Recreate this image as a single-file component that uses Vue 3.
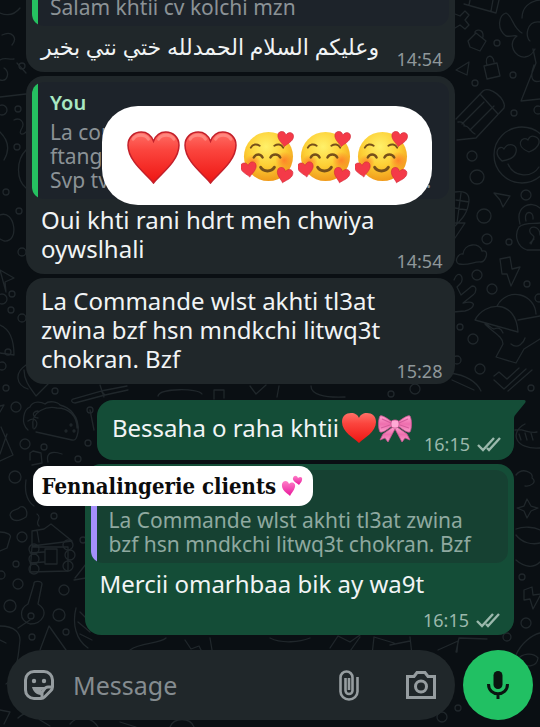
<template>
  <div class="chat">
    <svg class="wallpaper" viewBox="0 0 540 727" preserveAspectRatio="xMidYMid slice" aria-hidden="true">
      <!-- small bubbles scattered between the doodles -->
      <circle v-for="(dot, i) in dots" :key="i" :cx="dot[0]" :cy="dot[1]" :r="dot[2]" />
      <!-- right side -->
      <path d="M464 4l32 9 3-13M470 0l-1 5M493 0l-2 11" />
      <path d="M455 14l5 2 5-5 4 4-4 5 4 5-4 4-5-4-5 3" />
      <path d="M468 41l8-8 10 8-6 10-10-4zM475 33c-1-4 9-5 8 4" />
      <path d="M484 66l13-3 3 13-13 3zM487 65c-3-10 6-12 7-3" />
      <path d="M456 70l13-8-2 13z" />
      <path d="M522 33c-10-6-9-17-16-20-7 2-10 16 0 23 6 1 8-1 11 0-10 8-2 22 8 21 6-1 8-4 10-8 M540 22c-14-2-15 16-10 19M522 18c0-10 7-17 18-18" />
      <path d="M533 49l3 14-15 38 19-2M534 65c-5 14-1 18 6 16" />
      <path d="M456 119l27-28c6-6 24 8 21 17l-28 30-19 2M462 124l22-22M470 130l24-24M480 94l18 20M458 122c4-1 7 2 6 4 5-1 6 6 11 8" />
      <circle cx="522" cy="155" r="28" />
      <path d="M502 161c-10-9-2-17 2-12 4-7 14-5 12 3-1 5-7 8-14 9zM529 152c-15-6-7-17-1-12 3-7 12-3 11 3-1 4-5 7-10 9zM508 164c6 14 24 14 31 3" />
      <path d="M494 193l16 3-7 11-3-7zM455 192c8-1 14 0 14 8-1 14-8 20-14 26M456 200l13 2M455 208l12 2M461 193l-4 30M455 223l10 0-10 15" />
      <path d="M519 227c5-5 15-3 21-4M519 227c-5 8-2 20 8 23l13 0M520 224c-5-18 11-24 20-16M526 221c-3-11 8-11 7-2M534 239l-4 4M540 235c0-10-12-10-10-3 0 2 3 3 4 5l-3 7" />
      <path d="M459 264c-6-3 0-11 4-10 1-11 17-12 19-3 8-2 4 11-1 11-7-1-12 4-22 2z" />
      <path d="M500 259l10-2 2 12 8-2-9 19-4-12-5 0z" />
      <path d="M454 280c4-12 12-2 6 4l-3 3 4 8 11-9c6 0 4 7 1 9l-10 8c15-4 12 6 2 8l-12 1" />
      <path d="M475 320c9-18 41-22 43 12zM497 306c11-20 38-12 39 8M518 320l22-4M485 324c7 8 18 12 18 20l-7 13 20 6 8-14 16-10M485 324c5 1 5 4 9 5 4-2 7-1 9 4M511 344c7 6 13-2 14-6" />
      <path d="M494 376l5-4 8 7 12-11M494 380l10 9 22-20M508 391l24-21M450 373c16 2 27 9 31 18M452 380l22 10" />
      <path d="M525 424c-16 8-10 26 15 24M515 430c8-2 14 4 22 2M519 434l2 6M525 433l2 7M531 433l2 7" />
      <path d="M516 475c6-8 18-3 16 3 6 4-2 9-7 8M527 499l4 7 7 2-7 3-4 7-3-7-7-3 7-2zM516 529c8-3 18-2 24 1M516 535c6 8 16 10 24 8M516 560c9 8 18 8 24 2" />
      <path d="M524 590l8-3 1 8 8-1-8 15-3-10-6 1zM516 655c5-12 16-20 24-22M517 660c5-7 16-8 21-2-1 9-12 10-16 4M438 650l20-9-1 11M330 648l8-12 12 6 10-7M348 654l12-17M372 655l2-18 20 6M390 645l20-4M412 655l-2-18M456 652l3-14 28 1" />
      <!-- left side -->
      <path d="M0 80c8 2 10-8 4-12M0 13c10 4 16 0 20-5M2 35c10-5 16 3 10 10M0 60c5-3 9 0 14-1M17 63l9 10M0 97l26-3M14 120c6-3 11 2 8 8-4 6 0 8 4 4M0 132c8 8 10 18 4 28M26 150c-10 10-10 30 0 38M0 215c15-6 20 28 4 26l-4-2M0 270l14 8-9 4 1 10zM0 325c12 5 14 20 14 30l-14-2M26 365c-12 8-10 20 2 24" />
      <path d="M24 370c0 12 8 20 12 26l18-18M28 430c-8-7-4-21 2-23 3-7 12-5 15-3 4-4 13-2 15 1 8 2 20 10 18 27-1 5-2 9-6 8l-36-8M33 428c-3-18 15-22 24-20 12 0 20 8 20 20M28 421c8-6 12 4 6 8M38 411c-8 1-4 7 0 7" />
      <path d="M73 399l28-8 4 4-30 8c-4 0-4-3-2-4zM101 391l26-5M105 395l23-5M0 406l4-1-4 7M1 427l12 28-13 6M7 434l-7 20M30 460v-7l3-2 8 2 1 10-10 2M48 462c-3-12 8-10 14-8M90 410l4 20M26 480c-3 20 8 26 8 26" />
      <path d="M10 515c1-7 8-4 10-8 6-2 8 6 6 10-6 4-14 6-16-2zM37 514c6 4-3 8 2 12M32 531l12-2 7-5 21 17-40 5zM37 530l2 12M32 547h36v24l-38 1zM45 549h12v15H45zM30 553l14-1M30 563l14-1" />
      <path d="M0 532c7 0 12 3 10 6l-3 10-7 3M34 584c-1-4 8-3 8 0l-4 20c12 8 4 20-8 20-12-4-10-16-2-20zM18 628l12-8M75 578l11-14M74 580l12-2M40 650l9-24 17 24M76 608c-4 16 0 32 12 40M80 612l8 8M78 622l12 10M80 634l12 6" />
      <path d="M0 626c16 0 20 8 20 14-2 20-4 38-14 44M0 640l6 3M0 710l10 2-6 12M18 718c8-8 18-4 22 2l10 6M70 724c10-12 24-4 28 3M120 722l16 5M170 727c4-10 20-10 24 0" />
      <!-- slivers seen between the bubbles -->
      <path d="M100 385l4 12M158 396c2-8 40-8 44-2M214 399v-9h10v8M250 386l6 8 10-9M277 397l2-11M311 386c0 8 12 12 34 11M130 650c10-8 30-6 36-12M185 640l6 9 8-3 2 4M210 638l2 12M270 638c12 6 30 4 40 0" />
    </svg>

    <svg class="sprites" width="0" height="0" aria-hidden="true">
      <defs>
        <linearGradient id="redFill" x1="0" y1="0" x2="0" y2="1">
          <stop offset="0" stop-color="#ff7067" />
          <stop offset="0.35" stop-color="#fb453e" />
          <stop offset="1" stop-color="#ee1512" />
        </linearGradient>
        <radialGradient id="faceFill" cx="0.45" cy="0.3" r="0.7">
          <stop offset="0" stop-color="#fff16a" />
          <stop offset="0.55" stop-color="#fdcf35" />
          <stop offset="1" stop-color="#f09a1a" />
        </radialGradient>
        <radialGradient id="blush">
          <stop offset="0" stop-color="#ff6a26" stop-opacity="0.7" />
          <stop offset="1" stop-color="#ff6a26" stop-opacity="0" />
        </radialGradient>
        <linearGradient id="pinkFill" x1="0" y1="0" x2="0" y2="1">
          <stop offset="0" stop-color="#ff7fc8" />
          <stop offset="1" stop-color="#e8169a" />
        </linearGradient>
        <linearGradient id="bowFill" x1="0" y1="0" x2="0" y2="1">
          <stop offset="0" stop-color="#ffa0cf" />
          <stop offset="0.5" stop-color="#ee6fae" />
          <stop offset="1" stop-color="#fb9acb" />
        </linearGradient>
      </defs>
      <symbol id="heart" viewBox="0 0 52 52">
        <path d="M26 51C20 43 1 30 1 14C1 6 7 1 14 1C20 1 24 5 26 10C28 5 32 1 38 1C45 1 51 6 51 14C51 30 32 43 26 51Z" fill="url(#redFill)" stroke="#c3202a" stroke-width="1.5" />
        <path d="M6 8C9 3 18 3 21 8M31 8C34 3 43 3 46 8" fill="none" stroke="#ff9d94" stroke-width="3" stroke-linecap="round" opacity="0.6" />
      </symbol>
      <symbol id="softHeart" viewBox="0 0 34 30">
        <path d="M17 30C12 25 0 19 0 9C0 3 4 0 9 0C13 0 16 2 17 5C18 2 21 0 25 0C30 0 34 3 34 9C34 19 22 25 17 30Z" fill="url(#redFill)" />
      </symbol>
      <symbol id="loveFace" viewBox="0 0 54 54">
        <circle cx="28" cy="26" r="25" fill="url(#faceFill)" />
        <circle cx="12" cy="32" r="8" fill="url(#blush)" />
        <circle cx="44" cy="30" r="9" fill="url(#blush)" />
        <g fill="none" stroke="#76501a" stroke-width="2" stroke-linecap="round">
          <path d="M10 17C12 13 16 13 19 15M34 15C37 13 41 13 43 17" />
          <path d="M13 27C15 23 20 23 22 27M30 27C32 23 38 23 40 27" stroke-width="2.5" />
          <path d="M20 37C23 42 31 42 34 37" stroke-width="3" />
        </g>
        <g stroke="#d12a3a">
          <use href="#miniHeart" transform="translate(37 1) rotate(8 8 8)" />
          <use href="#miniHeart" transform="translate(0 32) rotate(-8 8 8)" />
          <use href="#miniHeart" transform="translate(36 38) rotate(14 8 8)" />
        </g>
      </symbol>
      <path id="miniHeart" d="M8 15C6 12 0 9 0 4C0 1 2 0 4 0C6 0 7 1 8 3C9 1 11 0 12 0C14 0 16 1 16 4C16 9 10 12 8 15Z" fill="#f43a48" stroke-width="0.6" />
    </svg>

    <main class="messages">
      <article class="bubble incoming">
        <blockquote class="quote">
          <p>Salam khtii cv kolchi mzn</p>
        </blockquote>
        <div class="body">
          <p class="text arabic" dir="rtl" lang="ar">وعليكم السلام الحمدلله ختي نتي بخير</p>
          <time>14:54</time>
        </div>
      </article>

      <article class="bubble incoming">
        <blockquote class="quote">
          <strong>You</strong>
          <p>La comm</p>
          <p>ftange</p>
          <p class="cut"><span>Svp tv</span><span>...</span></p>
        </blockquote>
        <div class="body">
          <p class="text">{{ 'Oui khti rani hdrt meh chwiya\noywslhali' }}</p>
          <time>14:54</time>
        </div>
        <div class="sticker reactions">
          <svg v-for="(name, i) in reactions" :key="i" class="emoji"><use :href="'#' + name" /></svg>
        </div>
      </article>

      <article class="bubble incoming plain">
        <div class="body">
          <p class="text">{{ 'La Commande wlst akhti tl3at\nzwina bzf hsn mndkchi litwq3t\nchokran. Bzf' }}</p>
          <time>15:28</time>
        </div>
      </article>

      <article class="bubble outgoing short">
        <svg class="tail" viewBox="0 0 12 18" aria-hidden="true"><path d="M0 0H10C12 0 12 2 11 3L2 14Q0 16 0 18Z" fill="#144d37" /></svg>
        <div class="body">
          <p class="text">
            Bessaha o raha khtii
            <svg class="inline-heart" viewBox="0 0 34 30"><use href="#softHeart" /></svg>
            <svg class="bow" viewBox="0 0 34 28">
              <path d="M15 13L5 20L2 26L7 24L10 28L17 15L24 28L27 24L32 26L29 20L19 13Z" fill="url(#bowFill)" stroke="#c9528f" stroke-width="0.8" />
              <path d="M14 8C9 4 4 1 2 2C0 6 0 14 2 18C5 19 10 15 14 12ZM20 8C25 4 30 1 32 2C34 6 34 14 32 18C29 19 24 15 20 12Z" fill="url(#bowFill)" stroke="#c9528f" stroke-width="0.8" />
              <path d="M4 5L13 9M3 14L12 11M30 5L21 9M31 14L22 11" stroke="#d65d9c" stroke-width="1.2" />
              <rect x="13" y="6" width="8" height="8" rx="3" fill="#ffa9d4" stroke="#c9528f" stroke-width="0.8" />
            </svg>
          </p>
          <span class="meta">
            <time>16:15</time>
            <svg class="checks" viewBox="0 0 25 16" role="img" aria-label="Delivered"><path d="M1 9L6 14L17 2M10 12L12 14L23 2" /></svg>
          </span>
        </div>
      </article>

      <article class="bubble outgoing">
        <blockquote class="quote">
          <strong>&nbsp;</strong>
          <p>{{ 'La Commande wlst akhti tl3at zwina\nbzf hsn mndkchi litwq3t chokran. Bzf' }}</p>
        </blockquote>
        <div class="body stacked">
          <p class="text">Mercii omarhbaa bik ay wa9t</p>
          <span class="meta">
            <time>16:15</time>
            <svg class="checks" viewBox="0 0 25 16" role="img" aria-label="Delivered"><path d="M1 9L6 14L17 2M10 12L12 14L23 2" /></svg>
          </span>
        </div>
        <div class="sticker label">
          <span>Fennalingerie clients</span>
          <svg class="hearts" viewBox="0 0 22 22">
            <path d="M9 21C6 18 0 15 1 9C2 5 7 5 8 9C11 6 15 8 14 12C13 16 10 18 9 21Z" fill="url(#pinkFill)" />
            <path d="M18 10C16 8 11 6 12 3C13 0 16 0 17 3C19 1 22 2 21 5C21 7 19 8 18 10Z" fill="url(#pinkFill)" />
          </svg>
        </div>
      </article>
    </main>

    <form class="composer" @submit.prevent>
      <div class="field">
        <button type="button" aria-label="Emoji and stickers">
          <svg width="30" height="30" viewBox="0 0 30 30">
            <path d="M10 1.500H20A8.500 8.500 0 0 1 28.500 10V17C28.500 19 27.500 20 26.500 21L20.500 27C19.500 28 18 28.500 17 28.500H10A8.500 8.500 0 0 1 1.500 20V10A8.500 8.500 0 0 1 10 1.500Z" class="line" />
            <path d="M28 17H24C20 17 20 21 18 22V28" class="line" />
            <circle cx="10" cy="11" r="2.200" /><circle cx="20" cy="11" r="2.200" />
            <path d="M8 17H22L17 21V25C12 25 9 21 8 17Z" />
          </svg>
        </button>
        <input v-model="draft" type="text" placeholder="Message" aria-label="Message" />
        <button type="button" aria-label="Attach">
          <svg width="20" height="31" viewBox="0 0 20 31">
            <path d="M18.500 7V21.500A8.500 8 0 0 1 1.500 21.500V7.500A6 6 0 0 1 13.500 7.500V20.500A3.500 3.500 0 0 1 6.500 20.500V8M10 8V20" class="line clip" />
          </svg>
        </button>
        <button type="button" class="camera" aria-label="Camera">
          <svg width="30" height="28" viewBox="0 0 30 28">
            <path d="M1.500 5.500H8L11 1.500H19L22 5.500H28.500V26.500H1.500Z" class="line" />
            <circle cx="15" cy="15.500" r="5.500" class="line" />
          </svg>
        </button>
      </div>
      <button type="button" class="mic" aria-label="Record voice message">
        <svg width="22" height="30" viewBox="0 0 22 30">
          <rect x="6.500" y="1" width="9" height="18" rx="4.500" />
          <path d="M1.500 14C1.500 27 20.500 27 20.500 14M11 23V29" class="line" />
        </svg>
      </button>
    </form>
  </div>
</template>

<script setup>
import { ref } from 'vue'

const draft = ref('')

const reactions = ['heart', 'heart', 'loveFace', 'loveFace', 'loveFace']

// [x, y, radius]
const dots = [
  [497, 43, 3], [475, 83, 3], [513, 75, 3], [514, 113, 3], [538, 110, 4],
  [472, 156, 5], [477, 177, 7], [526, 195, 5], [484, 216, 7], [487, 239, 5],
  [509, 242, 3], [477, 275, 5], [492, 289, 5], [527, 284, 3], [460, 327, 3],
  [473, 339, 5], [480, 369, 5], [457, 360, 4], [531, 388, 3], [539, 298, 4],
  [415, 389, 5], [391, 394, 3], [522, 577, 3], [526, 623, 5], [507, 637, 4],
  [458, 708, 3], [442, 717, 5], [2, 110, 5], [18, 109, 3], [17, 147, 3],
  [6, 192, 3], [19, 211, 3], [22, 252, 4], [2, 299, 5], [12, 294, 3],
  [11, 310, 3], [22, 318, 4], [8, 352, 3], [2, 366, 4], [6, 388, 3],
  [55, 391, 3], [16, 407, 5], [90, 410, 3], [25, 444, 5], [44, 447, 3],
  [88, 443, 3], [78, 459, 3], [15, 477, 6], [54, 516, 3], [22, 537, 5],
  [16, 564, 3], [18, 584, 5], [10, 606, 6], [64, 590, 5], [59, 615, 6],
  [32, 637, 3], [66, 632, 3], [1, 575, 4], [83, 540, 3], [34, 549, 5],
  [34, 559, 5], [34, 569, 5], [68, 545, 5], [70, 555, 5], [68, 566, 5],
  [71, 425, 1], [66, 431, 1], [74, 431, 1], [31, 616, 3], [22, 66, 3]
]
</script>

<style>
body {
  margin: 0;
  background: #0a0f13;
}
</style>

<style scoped>
.chat {
  position: relative;
  display: flex;
  flex-direction: column;
  height: 100vh;
  overflow: hidden;
  background: #0a0f13;
  color: #f1f4f5;
  font-family: "Noto Sans", "Open Sans", sans-serif;
}

.wallpaper {
  position: absolute;
  inset: 0;
  width: 100%;
  height: 100%;
  fill: none;
  stroke: #20272b;
  stroke-width: 1.3;
  stroke-linejoin: round;
  stroke-linecap: round;
}

.sprites {
  position: absolute;
}

p,
blockquote {
  margin: 0;
}

.messages {
  position: relative;
  flex: 1;
  min-height: 0;
  display: flex;
  flex-direction: column;
  justify-content: flex-end;
  gap: 4px;
  padding: 0 26px 15px;
}

.bubble {
  position: relative;
  flex: none;
  box-sizing: border-box;
  width: 88%;
  padding: 6px 6px 3px;
  border-radius: 18px;
}

.incoming {
  align-self: flex-start;
  background: #20272a;
}

.plain {
  padding-top: 8px;
}

.outgoing {
  align-self: flex-end;
  padding-bottom: 5px;
  border-radius: 16px;
  background: #144d37;
}

.short {
  width: auto;
  margin-top: 12px;
  padding-bottom: 6px;
  border-top-right-radius: 0;
}

.tail {
  position: absolute;
  top: 0;
  left: 100%;
  width: 12px;
  height: 18px;
}

.quote {
  margin-bottom: 6px;
  padding: 9px 18px 7px;
  border-radius: 12px;
  background: linear-gradient(to right, #25c160 6px, #1d232a 6px);
  color: #8b9296;
  font-size: 21px;
  line-height: 24px;
  white-space: pre-line;
}

.quote strong {
  display: block;
  margin-bottom: 5px;
  color: #a9e8c2;
  font-size: 20px;
  font-weight: 600;
  line-height: 24px;
}

.outgoing .quote {
  background: linear-gradient(to right, #a58ffb 6px, #164132 6px);
  color: #8fa9a0;
}

.cut {
  display: flex;
  justify-content: space-between;
}

.body {
  display: flex;
  align-items: flex-end;
  justify-content: space-between;
  padding: 0 7px 0 9px;
}

.stacked {
  flex-direction: column;
  align-items: stretch;
  gap: 4px;
}

.text {
  margin-bottom: 8px;
  font-size: 24px;
  line-height: 29px;
  white-space: pre-line;
}

.arabic {
  font-family: "Noto Sans", "DejaVu Sans", sans-serif;
  font-size: 22px;
}

.short .body {
  gap: 12px;
  padding: 3px 6px 0 9px;
}

.short .text {
  display: flex;
  align-items: center;
  line-height: 37px;
  white-space: nowrap;
}

time {
  color: #8f979a;
  font-size: 18px;
  line-height: 20px;
}

.meta {
  display: flex;
  align-items: center;
  justify-content: flex-end;
  gap: 7px;
}

.outgoing time {
  color: #9bb8ac;
}

.checks {
  width: 25px;
  height: 16px;
  fill: none;
  stroke: #9bb8ac;
  stroke-width: 2.4;
}

.inline-heart {
  width: 34px;
  height: 30px;
  margin-left: 3px;
}

.bow {
  width: 34px;
  height: 28px;
  margin-left: 2px;
}

.sticker {
  position: absolute;
  display: flex;
  align-items: center;
  background: #fff;
}

.reactions {
  top: 30px;
  left: 76px;
  gap: 4px;
  padding: 25px 24px 21px 25px;
  border-radius: 36px;
}

.emoji {
  width: 53px;
  height: 53px;
}

.label {
  top: 2px;
  left: -52px;
  gap: 5px;
  padding: 0 10px 0 9px;
  border-radius: 14px;
  color: #0c0c0c;
  font: bold 22px/40px "DejaVu Serif Condensed", "DejaVu Serif", serif;
  white-space: nowrap;
}

.hearts {
  width: 22px;
  height: 22px;
}

.composer {
  position: relative;
  display: flex;
  gap: 8px;
  padding: 0 7px 7px;
}

.field {
  flex: 1;
  min-width: 0;
  display: flex;
  align-items: center;
  box-sizing: border-box;
  height: 70px;
  padding: 0 19px 0 17px;
  border-radius: 35px;
  background: #20272a;
}

button {
  display: flex;
  align-items: center;
  justify-content: center;
  flex: none;
  padding: 0;
  border: 0;
  background: none;
  color: #969da0;
}

button svg {
  fill: currentColor;
}

button .line {
  fill: none;
  stroke: currentColor;
  stroke-width: 3;
}

button .clip {
  stroke-width: 2.6;
}

.camera {
  margin-left: 47px;
}

input {
  flex: 1;
  min-width: 0;
  margin-left: 19px;
  padding: 0;
  border: 0;
  outline: 0;
  background: none;
  color: #f1f4f5;
  font: 25px/34px "Noto Sans", "Open Sans", sans-serif;
}

input::placeholder {
  color: #858c90;
  opacity: 1;
}

.mic {
  width: 70px;
  height: 70px;
  border-radius: 50%;
  background: #21c063;
  color: #0a1510;
}
</style>
